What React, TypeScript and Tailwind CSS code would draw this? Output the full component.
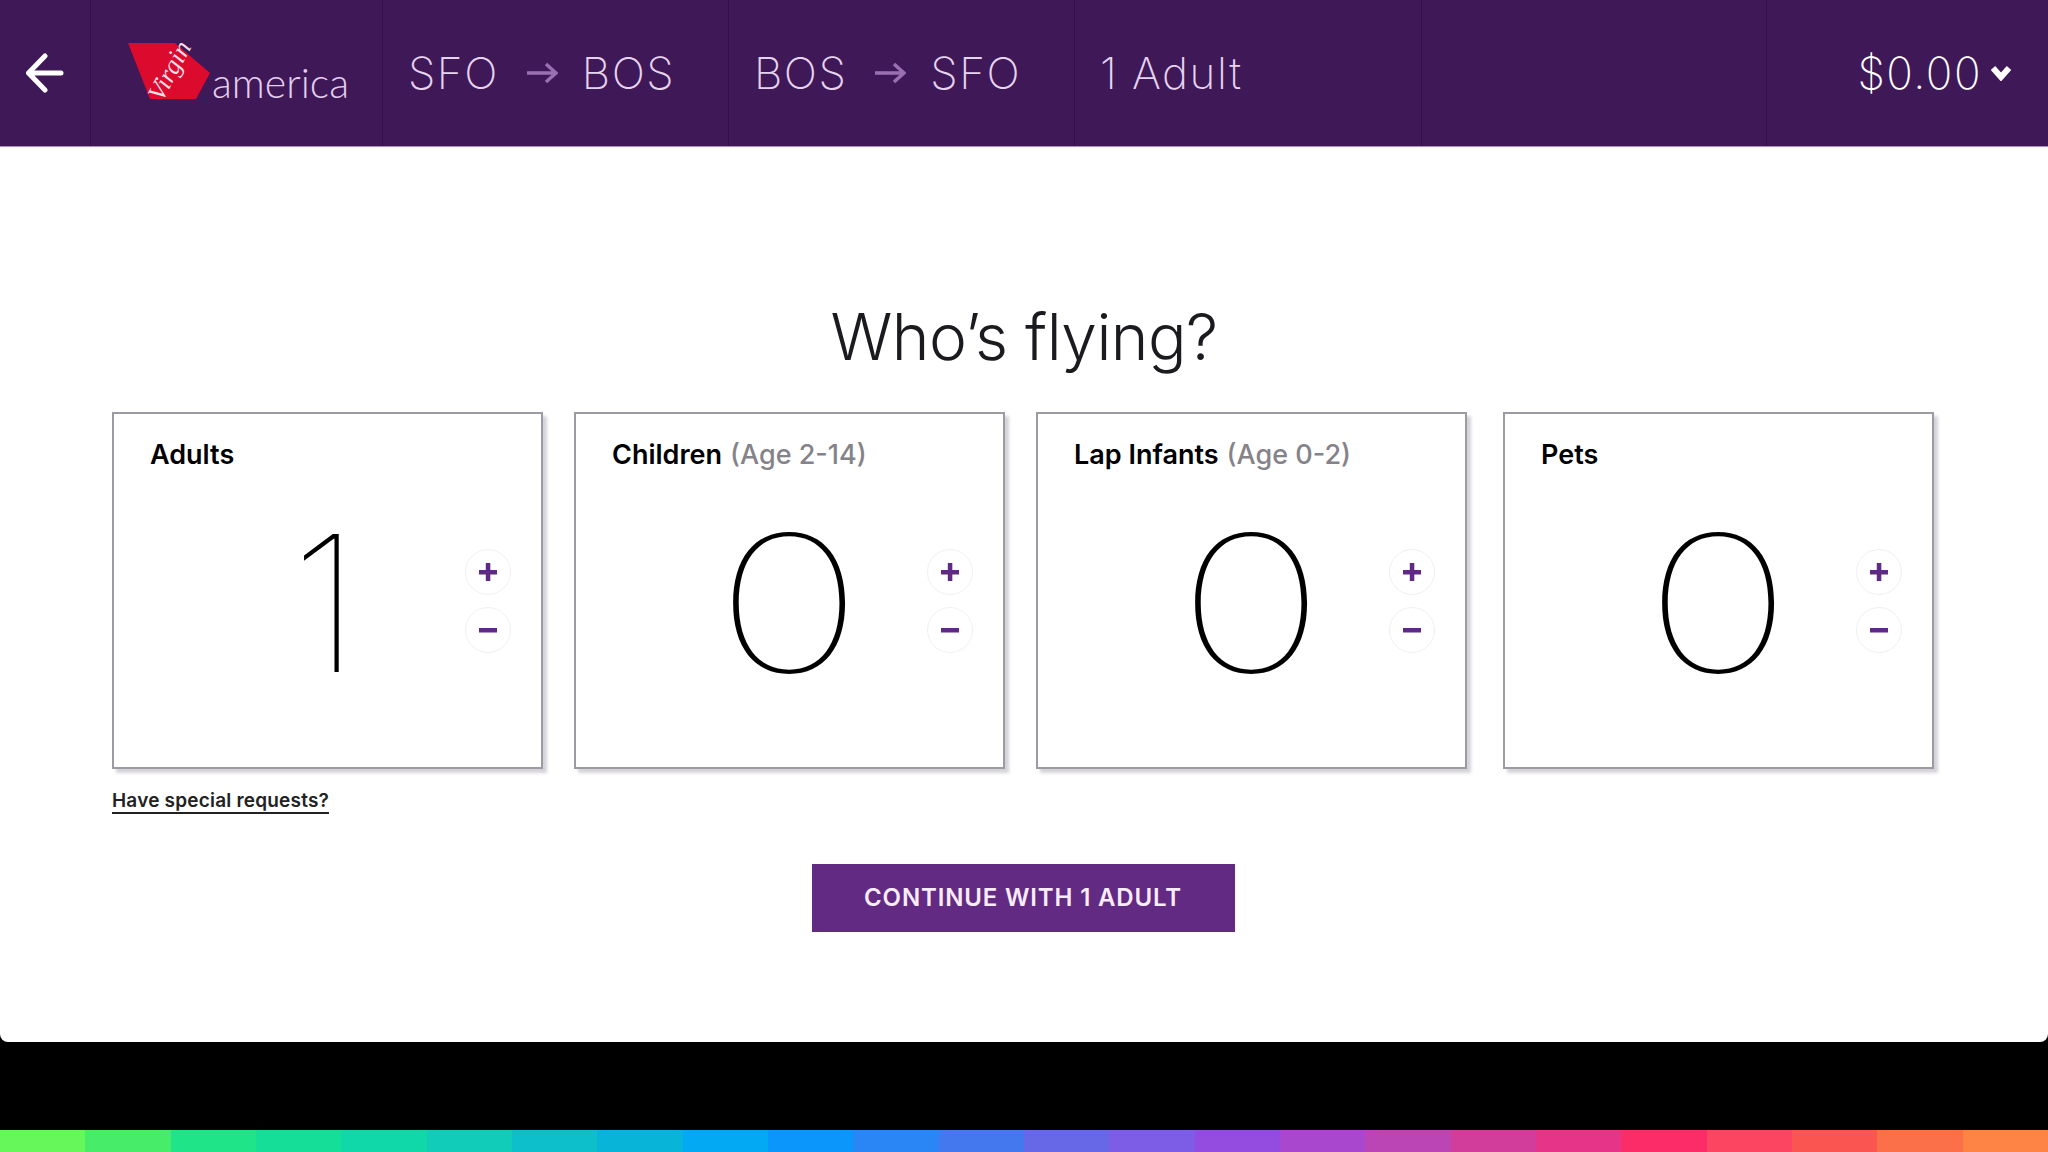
import React from "react";

const stripes = [
  "#66f75a", "#47ec68", "#1fe488", "#14de97", "#10d8a8", "#10ccb8", "#0cbfca", "#08b4d8",
  "#03aaf3", "#0a96fb", "#2a86f5", "#4478ef", "#6768e8", "#7d5de6", "#944be0", "#a948cf",
  "#bb45b5", "#d23d9c", "#e63588", "#fb2c68", "#fc4560", "#fb5552", "#fc7049", "#fe8445",
];

const passengers = [
  { label: "Adults", note: "", count: 1, gap: "mr-[31px]" },
  { label: "Children", note: "(Age 2-14)", count: 0, gap: "mr-[31px]" },
  { label: "Lap Infants", note: "(Age 0-2)", count: 0, gap: "mr-[36px]" },
  { label: "Pets", note: "", count: 0, gap: "" },
];

function Arrow() {
  return (
    <svg width="32" height="24" viewBox="0 0 32 24" fill="none" stroke="#9a70b2" strokeWidth="3.5" className="ml-[27px] mr-[24px]">
      <path d="M1 12h29M20 3l10 9-10 9" />
    </svg>
  );
}

function Route({ from, to }: { from: string; to: string }) {
  return (
    <div className="flex h-full w-[346px] items-center border-r border-[#32104a] pl-[25px]">
      <span>{from}</span>
      <Arrow />
      <span>{to}</span>
    </div>
  );
}

function Logo() {
  return (
    <div className="relative h-full w-[292px] border-r border-[#32104a]">
      <svg width="292" height="146" className="absolute left-0 top-0">
        <polygon points="37,43 84,43 119,73 105,99 59,99" fill="#dc0a2d" />
      </svg>
      <span className="absolute left-[47px] top-[58px] -rotate-[62deg] font-['Liberation_Serif'] text-[26px] italic leading-none tracking-normal text-[#f8dfe6]">
        Virgin
      </span>
      <span className="absolute left-[121px] top-[62px] font-['Lato'] text-[41px] font-light leading-none tracking-normal text-[#e3d0ee]">
        america
      </span>
    </div>
  );
}

function Stepper({ sign }: { sign: "+" | "-" }) {
  return (
    <button className="flex h-[46px] w-[46px] items-center justify-center rounded-full border border-[#f1eff2] bg-white">
      <svg width="18" height="18" viewBox="0 0 18 18" fill="#5f2a85">
        <rect x="0" y="7" width="18" height="4.5" />
        {sign === "+" && <rect x="6.8" y="0" width="4.5" height="18" />}
      </svg>
    </button>
  );
}

function Card({ label, note, count, gap }: { label: string; note: string; count: number; gap: string }) {
  return (
    <div className={`h-[357px] w-[431px] border-2 border-[#9b9ba1] bg-white shadow-[4px_4px_3px_#d5d3da] ${gap}`}>
      <div className="pl-[36px] pt-[23px] text-[27px] font-semibold leading-[36px] text-black">
        {label}
        {note && <span className="ml-[8px] font-medium text-[#85838a]">{note}</span>}
      </div>
      <div className="grid grid-cols-[1fr_auto_1fr] px-[30px] pt-[45px]">
        <div />
        <div className={count === 0 ? "scale-x-[1.32] text-[190px] font-thin leading-[170px] text-black" : "mr-[4px] text-[190px] font-thin leading-[170px] text-black"}>
          {count}
        </div>
        <div className="flex flex-col items-end gap-[12px] pt-[31px]">
          <Stepper sign="+" />
          <Stepper sign="-" />
        </div>
      </div>
    </div>
  );
}

export default function App() {
  return (
    <div className="flex h-screen w-full flex-col overflow-hidden bg-black font-['Inter',sans-serif]">
      <header className="flex h-[147px] shrink-0 items-center border-b border-[#b08ac4] bg-[#3f1857] text-[44px] font-extralight tracking-[1.5px] text-[#e6d4ef]">
        <div className="flex h-full w-[91px] items-center justify-center border-r border-[#32104a]">
          <svg width="38" height="40" viewBox="0 0 38 40" fill="none" stroke="#fff" strokeWidth="5" strokeLinecap="round" strokeLinejoin="round">
            <path d="M3 20h32M19 3 2.500 20 19 37" />
          </svg>
        </div>
        <Logo />
        <Route from="SFO" to="BOS" />
        <Route from="BOS" to="SFO" />
        <div className="flex h-full w-[347px] items-center border-r border-[#32104a] pl-[25px]">1 Adult</div>
        <div className="h-full w-[345px] border-r border-[#32104a]" />
        <div className="flex h-full flex-1 items-center justify-end gap-[9px] pr-[37px] text-white">
          <span>$0.00</span>
          <svg width="20" height="16" viewBox="0 0 20 16" fill="none" stroke="#fff" strokeWidth="6">
            <path d="M2 3l8 9 8-9" />
          </svg>
        </div>
      </header>

      <main className="h-[895px] shrink-0 rounded-b-[8px] bg-white">
        <h1 className="pt-[148px] text-center text-[64px] font-light leading-[84px] tracking-[-0.5px] text-[#1b1b1f]">Who’s flying?</h1>
        <div className="flex pl-[112px] pt-[33px]">
          {passengers.map((p) => (
            <Card key={p.label} {...p} />
          ))}
        </div>
        <div className="pl-[112px] pt-[20px]">
          <a className="border-b-2 border-[#222] text-[19px] font-semibold leading-[24px] tracking-[0.2px] text-[#222]">Have special requests?</a>
        </div>
        <div className="flex justify-center pr-[2px] pt-[51px]">
          <button className="h-[68px] w-[423px] bg-[#622a82] text-[24px] font-semibold tracking-[0.85px] text-[#f8ecfb]">
            CONTINUE WITH 1 ADULT
          </button>
        </div>
      </main>

      <div className="flex-1" />
      <div className="flex h-[22px] shrink-0">
        {stripes.map((c) => (
          <div key={c} className="flex-1" style={{ backgroundColor: c }} />
        ))}
      </div>
    </div>
  );
}
